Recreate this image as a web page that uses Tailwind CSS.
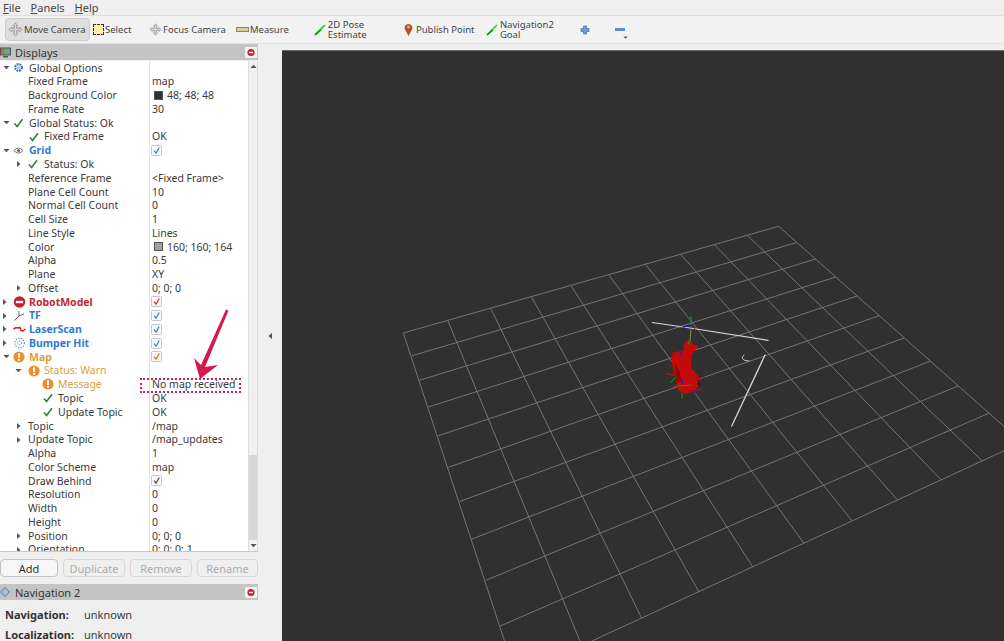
<!DOCTYPE html>
<html lang="en">
<head>
  <meta charset="UTF-8">
  <title>RViz</title>
  <script src="https://cdn.jsdelivr.net/npm/@tailwindcss/browser@4"></script>
</head>
<body class="w-[1004px] h-[641px] overflow-hidden bg-[#efefef] text-[#3a3a3a] font-['Noto_Sans',sans-serif] text-[10.5px] leading-none">
  <svg class="hidden">
    <symbol id="check" viewBox="0 0 10 10"><path d="M1 5.5 L3.6 8.5 L9 1.2" fill="none" stroke="#2f7d32" stroke-width="1.5"/></symbol>
    <symbol id="warn" viewBox="0 0 12 12"><circle cx="6" cy="6" r="5.6" fill="#ee8f2d"/><rect x="5" y="2.4" width="2" height="4.6" fill="#fff"/><rect x="5" y="8" width="2" height="1.8" fill="#fff"/></symbol>
    <symbol id="right" viewBox="0 0 5 8"><path d="M1 1 L4.5 4 L1 7Z" fill="#555"/></symbol>
    <symbol id="down" viewBox="0 0 8 5"><path d="M0.5 0.8 L7.5 0.8 L4 4.5Z" fill="#555"/></symbol>
    <symbol id="tick" viewBox="0 0 11 11"><rect x="0.5" y="0.5" width="10" height="10" rx="1" fill="#f8f8f8" stroke="#c8c8c8"/><path d="M3 5.5 L5 8.2 L8.2 2.5" fill="none" stroke="currentColor" stroke-width="1.2"/></symbol>
    <symbol id="green" viewBox="0 0 12 12"><path d="M1 11 L11 1" stroke="#18d818" stroke-width="1.6"/><path d="M1 11 L7 6" stroke="#0a8a0a" stroke-width="1.4"/></symbol>
    <symbol id="move" viewBox="0 0 16 16"><path d="M8 1 L10.5 4 H9.2 V6.8 H12 V5.5 L15 8 L12 10.5 V9.2 H9.2 V12 H10.5 L8 15 L5.5 12 H6.8 V9.2 H4 V10.5 L1 8 L4 5.5 V6.8 H6.8 V4 H5.5Z" fill="#d8d8d8" stroke="#8a8a8a" stroke-width="0.8"/></symbol>
    <symbol id="closeb" viewBox="0 0 12 11"><rect width="12" height="11" rx="1" fill="#f3f3f3"/><circle cx="6" cy="5.5" r="3.6" fill="#c8213a"/><rect x="4" y="4.8" width="4" height="1.4" fill="#f3f3f3"/></symbol>
  </svg>

  <div class="h-[15px] flex items-center gap-[10px] pl-[3px] text-[11px] text-[#444]">
    <span><u>F</u>ile</span><span><u>P</u>anels</span><span><u>H</u>elp</span>
  </div>

  <div class="h-[29px] flex items-center pl-[5px] border-y border-[#e0e0e0] bg-[#f2f2f2] text-[9.5px] text-[#444]">
    <div class="h-[23px] w-[85px] flex items-center pl-[2px] gap-px rounded-sm bg-[#dedede] border border-[#cdcdcd]"><svg class="w-[15px] h-[15px]"><use href="#move"/></svg>Move Camera</div>
    <div class="flex items-center ml-[3px] w-[56px] gap-px"><span class="w-[11px] h-[11px] bg-[#fdf3a8] border border-dashed border-[#333]"></span>Select</div>
    <div class="flex items-center w-[87px] gap-px"><svg class="w-[13px] h-[13px]"><use href="#move"/></svg>Focus Camera</div>
    <div class="flex items-center w-[78px] gap-px"><span class="w-[13px] h-[5px] bg-[#d8cf9a] border border-[#8c8660]"></span>Measure</div>
    <div class="flex items-center w-[90px] gap-[2px]"><svg class="w-[12px] h-[12px]"><use href="#green"/></svg>2D Pose Estimate</div>
    <div class="flex items-center w-[82px] gap-[3px]"><svg class="w-[9px] h-[13px]" viewBox="0 0 9 13"><path d="M4.5 13 L1 6.5 A3.9 3.9 0 1 1 8 6.5Z" fill="#b5522a"/><circle cx="4.5" cy="4" r="1.4" fill="#e8b090"/></svg>Publish Point</div>
    <div class="flex items-center w-[90px] gap-[2px]"><svg class="w-[12px] h-[12px]"><use href="#green"/></svg>Navigation2 Goal</div>
    <svg class="w-[10px] h-[10px] ml-[4px]" viewBox="0 0 10 10"><path d="M3.5 1 H6.5 V3.5 H9 V6.5 H6.5 V9 H3.5 V6.5 H1 V3.5 H3.5Z" fill="#6f9fd8" stroke="#3a6ea8" stroke-width="0.7"/></svg>
    <div class="relative ml-[25px] w-[10px] h-[3px] bg-[#5e90cc]"><svg class="absolute top-[8px] left-[8px] w-[5px] h-[3px]"><use href="#down"/></svg></div>
  </div>

  <div class="flex h-[597px]">
    <div class="w-[258px] flex flex-col">
      <div class="h-[16px] flex items-center bg-[#c4c4c4] text-[11px] text-[#333]">
        <svg class="w-[11px] h-[11px] ml-0" viewBox="0 0 11 11"><rect x="0" y="0.5" width="11" height="8" fill="#555"/><rect x="1" y="1.5" width="3" height="6" fill="#c86060"/><rect x="4" y="1.5" width="3" height="6" fill="#60b070"/><rect x="7" y="1.5" width="3" height="6" fill="#8090c0"/><rect x="3" y="9" width="5" height="1.5" fill="#555"/></svg>
        <span class="ml-[4px]">Displays</span>
        <svg class="w-[12px] h-[11px] ml-auto mr-px"><use href="#closeb"/></svg>
      </div>

      <div class="relative h-[491px] mt-px flex bg-white border-b border-[#c8c8c8]">
        <div class="w-[248px] overflow-hidden">
          <div class="flex flex-col w-[248px] [&>div]:h-[13.78px] [&>div]:flex [&>div]:items-center [&_b]:font-bold">
            <div><div class="w-[149px] flex items-center pl-[3px]"><svg class="w-[7px] h-[5px] mr-[3px]"><use href="#down"/></svg><svg class="w-[11px] h-[11px] mr-[5px]" viewBox="0 0 12 12"><circle cx="6" cy="6" r="3.6" fill="none" stroke="#3c78c0" stroke-width="2.4" stroke-dasharray="2 0.9"/><circle cx="6" cy="6" r="1.6" fill="#a8c8ea"/></svg>Global Options</div></div>
            <div><div class="w-[149px] pl-[28px]">Fixed Frame</div><div class="pl-[3px]">map</div></div>
            <div><div class="w-[149px] pl-[28px]">Background Color</div><div class="pl-[5px] flex items-center"><span class="w-[9px] h-[9px] mr-[4px] bg-[#303030] border border-[#555]"></span>48; 48; 48</div></div>
            <div><div class="w-[149px] pl-[28px]">Frame Rate</div><div class="pl-[3px]">30</div></div>
            <div><div class="w-[149px] flex items-center pl-[3px]"><svg class="w-[7px] h-[5px] mr-[3px]"><use href="#down"/></svg><svg class="w-[11px] h-[10px] mr-[5px]"><use href="#check"/></svg>Global Status: Ok</div></div>
            <div><div class="w-[149px] flex items-center pl-[29px]"><svg class="w-[10px] h-[10px] mr-[5px]"><use href="#check"/></svg>Fixed Frame</div><div class="pl-[3px]">OK</div></div>
            <div><div class="w-[149px] flex items-center pl-[3px]"><svg class="w-[7px] h-[5px] mr-[3px]"><use href="#down"/></svg><svg class="w-[11px] h-[9px] mr-[5px]" viewBox="0 0 12 9"><path d="M1 4.5 Q6 -1 11 4.5 Q6 10 1 4.5Z" fill="none" stroke="#666"/><circle cx="6" cy="4.5" r="1.7" fill="#666"/></svg><b class="text-[#2f7ad0]">Grid</b></div><div class="pl-[2px] flex text-[#2f7ad0]"><svg class="w-[11px] h-[11px]"><use href="#tick"/></svg></div></div>
            <div><div class="w-[149px] flex items-center pl-[16px]"><svg class="w-[5px] h-[8px] mr-[7px]"><use href="#right"/></svg><svg class="w-[10px] h-[10px] mr-[6px]"><use href="#check"/></svg>Status: Ok</div></div>
            <div><div class="w-[149px] pl-[28px]">Reference Frame</div><div class="pl-[3px]">&lt;Fixed Frame&gt;</div></div>
            <div><div class="w-[149px] pl-[28px]">Plane Cell Count</div><div class="pl-[3px]">10</div></div>
            <div><div class="w-[149px] pl-[28px]">Normal Cell Count</div><div class="pl-[3px]">0</div></div>
            <div><div class="w-[149px] pl-[28px]">Cell Size</div><div class="pl-[3px]">1</div></div>
            <div><div class="w-[149px] pl-[28px]">Line Style</div><div class="pl-[3px]">Lines</div></div>
            <div><div class="w-[149px] pl-[28px]">Color</div><div class="pl-[5px] flex items-center"><span class="w-[9px] h-[9px] mr-[4px] bg-[#a0a0a4] border border-[#555]"></span>160; 160; 164</div></div>
            <div><div class="w-[149px] pl-[28px]">Alpha</div><div class="pl-[3px]">0.5</div></div>
            <div><div class="w-[149px] pl-[28px]">Plane</div><div class="pl-[3px]">XY</div></div>
            <div><div class="w-[149px] flex items-center pl-[16px]"><svg class="w-[5px] h-[8px] mr-[7px]"><use href="#right"/></svg>Offset</div><div class="pl-[3px]">0; 0; 0</div></div>
            <div><div class="w-[149px] flex items-center pl-[2px]"><svg class="w-[5px] h-[8px] mr-[6px]"><use href="#right"/></svg><svg class="w-[13px] h-[12px] mr-[3px]" viewBox="0 0 12 12"><circle cx="6" cy="6" r="5.8" fill="#c91f2c"/><rect x="2.4" y="4.8" width="7.2" height="2.4" fill="#fff"/></svg><b class="text-[#c3272f]">RobotModel</b></div><div class="pl-[2px] flex text-[#c3272f]"><svg class="w-[11px] h-[11px]"><use href="#tick"/></svg></div></div>
            <div><div class="w-[149px] flex items-center pl-[2px]"><svg class="w-[5px] h-[8px] mr-[6px]"><use href="#right"/></svg><svg class="w-[13px] h-[12px] mr-[3px]" viewBox="0 0 12 12"><path d="M5.5 6 V1" stroke="#2a9a3a"/><path d="M5.5 6 L10.5 4" stroke="#3a5ac8"/><path d="M5.5 6 L1 10.5" stroke="#d03040"/></svg><b class="text-[#2f7ad0]">TF</b></div><div class="pl-[2px] flex text-[#2f7ad0]"><svg class="w-[11px] h-[11px]"><use href="#tick"/></svg></div></div>
            <div><div class="w-[149px] flex items-center pl-[2px]"><svg class="w-[5px] h-[8px] mr-[6px]"><use href="#right"/></svg><svg class="w-[13px] h-[12px] mr-[3px]" viewBox="0 0 13 12"><path d="M0.5 6 L3 4.5 L5 5 L7 4.5 L8 7.5 L10 8 L12.5 6" fill="none" stroke="#e01c24" stroke-width="1.5"/></svg><b class="text-[#2f7ad0]">LaserScan</b></div><div class="pl-[2px] flex text-[#2f7ad0]"><svg class="w-[11px] h-[11px]"><use href="#tick"/></svg></div></div>
            <div><div class="w-[149px] flex items-center pl-[2px]"><svg class="w-[5px] h-[8px] mr-[6px]"><use href="#right"/></svg><svg class="w-[13px] h-[12px] mr-[3px]" viewBox="0 0 12 12"><circle cx="6" cy="6" r="4.8" fill="none" stroke="#3a86d8" stroke-width="1.2" stroke-dasharray="1.2 1.4"/><circle cx="6" cy="6" r="2" fill="none" stroke="#3a86d8" stroke-dasharray="1 1"/></svg><b class="text-[#2f7ad0]">Bumper Hit</b></div><div class="pl-[2px] flex text-[#2f7ad0]"><svg class="w-[11px] h-[11px]"><use href="#tick"/></svg></div></div>
            <div><div class="w-[149px] flex items-center pl-[3px]"><svg class="w-[7px] h-[5px] mr-[3px]"><use href="#down"/></svg><svg class="w-[12px] h-[12px] mr-[4px]"><use href="#warn"/></svg><b class="text-[#d9a13a]">Map</b></div><div class="pl-[2px] flex text-[#c9741f]"><svg class="w-[11px] h-[11px]"><use href="#tick"/></svg></div></div>
            <div><div class="w-[149px] flex items-center pl-[15px]"><svg class="w-[7px] h-[5px] mr-[6px]"><use href="#down"/></svg><svg class="w-[12px] h-[12px] mr-[4px]"><use href="#warn"/></svg><span class="text-[#d9a13a]">Status: Warn</span></div></div>
            <div><div class="w-[149px] flex items-center pl-[42px]"><svg class="w-[12px] h-[12px] mr-[4px]"><use href="#warn"/></svg><span class="text-[#d9a13a]">Message</span></div><div class="pl-[3px]">No map received</div></div>
            <div><div class="w-[149px] flex items-center pl-[43px]"><svg class="w-[10px] h-[10px] mr-[5px]"><use href="#check"/></svg>Topic</div><div class="pl-[3px]">OK</div></div>
            <div><div class="w-[149px] flex items-center pl-[43px]"><svg class="w-[10px] h-[10px] mr-[5px]"><use href="#check"/></svg>Update Topic</div><div class="pl-[3px]">OK</div></div>
            <div><div class="w-[149px] flex items-center pl-[16px]"><svg class="w-[5px] h-[8px] mr-[7px]"><use href="#right"/></svg>Topic</div><div class="pl-[3px]">/map</div></div>
            <div><div class="w-[149px] flex items-center pl-[16px]"><svg class="w-[5px] h-[8px] mr-[7px]"><use href="#right"/></svg>Update Topic</div><div class="pl-[3px]">/map_updates</div></div>
            <div><div class="w-[149px] pl-[28px]">Alpha</div><div class="pl-[3px]">1</div></div>
            <div><div class="w-[149px] pl-[28px]">Color Scheme</div><div class="pl-[3px]">map</div></div>
            <div><div class="w-[149px] pl-[28px]">Draw Behind</div><div class="pl-[2px] flex text-[#444]"><svg class="w-[11px] h-[11px]"><use href="#tick"/></svg></div></div>
            <div><div class="w-[149px] pl-[28px]">Resolution</div><div class="pl-[3px]">0</div></div>
            <div><div class="w-[149px] pl-[28px]">Width</div><div class="pl-[3px]">0</div></div>
            <div><div class="w-[149px] pl-[28px]">Height</div><div class="pl-[3px]">0</div></div>
            <div><div class="w-[149px] flex items-center pl-[16px]"><svg class="w-[5px] h-[8px] mr-[7px]"><use href="#right"/></svg>Position</div><div class="pl-[3px]">0; 0; 0</div></div>
            <div><div class="w-[149px] flex items-center pl-[16px]"><svg class="w-[5px] h-[8px] mr-[7px]"><use href="#right"/></svg>Orientation</div><div class="pl-[3px]">0; 0; 0; 1</div></div>
          </div>
        </div>
        <div class="absolute left-[149px] top-0 bottom-0 w-px bg-[#e2e2e2]"></div>
        <div class="w-[10px] flex flex-col items-center bg-[#f0f0f0] border-x border-[#dcdcdc]">
          <svg class="mt-[3px] w-[7px] h-[5px] rotate-180"><use href="#down"/></svg>
          <div class="mt-auto h-[85px] w-full bg-[#d8d8d8]"></div>
          <svg class="my-[3px] w-[7px] h-[5px]"><use href="#down"/></svg>
        </div>
        <div class="absolute left-[140px] top-[317px] w-[101px] h-[15px] border-2 border-dotted border-[#cc1d5c]"></div>
        <svg class="absolute left-[190px] top-[245px] w-[45px] h-[75px]" viewBox="190 305 45 75"><path d="M226 308.5 L228.5 309.5 L205 366 L218 364 L200 378 L194 357 L201 364Z" fill="#d8174f"/></svg>
      </div>

      <div class="flex gap-[5px] h-[18px] mt-[7px] text-[11px] [&>div]:flex [&>div]:items-center [&>div]:justify-center [&>div]:rounded-sm [&>div]:border">
        <div class="w-[58px] border-[#c4c4c4] bg-[#f6f6f6] text-[#333]">Add</div>
        <div class="w-[62px] border-[#d8d8d8] text-[#adadad]">Duplicate</div>
        <div class="w-[62px] border-[#d8d8d8] text-[#adadad]">Remove</div>
        <div class="w-[61px] border-[#d8d8d8] text-[#adadad]">Rename</div>
      </div>

      <div class="h-[16px] mt-[7px] flex items-center bg-[#c4c4c4] text-[11px] text-[#333]">
        <svg class="w-[10px] h-[10px]" viewBox="0 0 10 10"><path d="M5 0.5 L9.5 5 L5 9.5 L0.5 5Z" fill="#a8c0d8" stroke="#58789a"/></svg>
        <span class="ml-[5px]">Navigation 2</span>
        <svg class="w-[12px] h-[11px] ml-auto mr-px"><use href="#closeb"/></svg>
      </div>
      <div class="grid grid-cols-[79px_1fr] gap-y-[9px] pl-[5px] pt-[9px] text-[11px]">
        <b class="font-bold text-[#333]">Navigation:</b><span>unknown</span>
        <b class="font-bold text-[#333]">Localization:</b><span>unknown</span>
      </div>
    </div>

    <div class="w-[24px] flex items-center justify-center pb-[14px]"><svg class="w-[5px] h-[8px] rotate-180"><use href="#right"/></svg></div>

    <div class="flex-1 mt-[6px] bg-[#303030] border-t border-[#6a6a6a]">
      <svg class="block" width="722" height="591" viewBox="282 50 722 591">
        <g stroke="#757575" stroke-width="1" fill="none">
          <!-- depth lines -->
          <path d="M403.3 332 L516 675 M447.7 319.3 L582 645 M490.7 307.3 L641.7 617.3 M531.3 295.7 L699 591 M571 284.7 L752.7 565.7 M609 274 L804 542.3 M645.7 263.7 L852 519.7 M680.7 253.3 L897.3 498.7 M714.7 244 L941 478.7 M747.3 234.3 L982 459.7 M778.7 225.3 L1022 441.5"/>
          <!-- cross lines -->
          <path d="M403.3 332 L778.7 225.3 M412 354.7 L796 241.7 M419.3 379.3 L815.7 258 M428.3 406 L835.7 276 M438.3 434.7 L857 295 M448.3 466.3 L879 314.7 M460 500.3 L904 337 M472 538 L930 360.3 M485.7 579.3 L958 385 M500.3 625 L988.7 412.3 M516 675 L1022 441.5"/>
        </g>
        <g fill="none" stroke="#d4d4d4" stroke-linecap="round">
          <path d="M652.3 321.5 L690 327 L768 339.3" stroke-width="1.2"/>
          <path d="M765 354 L731.7 425" stroke-width="1.3"/>
          <path d="M744 354 Q740 357 745 359.5 L749 360" stroke-width="0.9"/>
        </g>
        <g transform="translate(630 300) scale(0.3333)">
          <path d="M183 85 L180 122" stroke="#8a8a50" stroke-width="3"/>
          <path d="M183 45 L183 78" stroke="#1a9a1a" stroke-width="3"/>
          <path d="M158 78 L190 72" stroke="#1a1ac8" stroke-width="4"/>
          <path d="M185 70 L195 85" stroke="#b02020" stroke-width="3"/>
          <path d="M127 155 L150 150 L162 148 L160 130 L175 118 L190 130 L205 135 L190 155 L185 162 L183 200 L205 225 L210 250 L195 270 L165 280 L145 268 L135 225 L125 185Z" fill="#c20a0a"/>
          <path d="M135 185 L150 215 L155 240 L140 245Z" fill="#8f0707"/>
          <path d="M205 232 L210 250 L204 256Z" fill="#301010"/>
          <g stroke-width="3" fill="none">
            <path d="M108 218 L135 222 M130 258 L150 250 M205 235 L226 228 M200 270 L215 262 M190 145 L205 142" stroke="#c21a1a"/>
            <path d="M122 245 L135 230 M145 255 L185 252 M155 275 L157 293 M178 118 L176 130" stroke="#18a018"/>
            <path d="M155 230 L158 250 M150 148 L155 165 M188 268 L196 280" stroke="#1a1ac0"/>
          </g>
        </g>
      </svg>
    </div>
  </div>
</body>
</html>
